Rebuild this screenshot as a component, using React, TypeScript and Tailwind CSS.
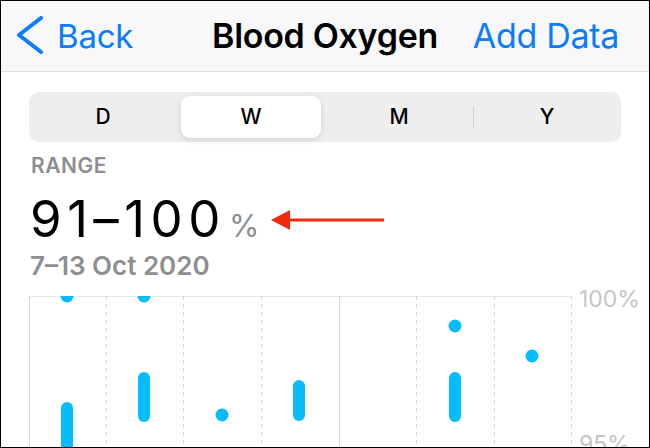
import React from "react";

const SEGMENTS = ["D", "W", "M", "Y"];
const BLUE = "#05bdfd";

// column centres inside the chart (px), dots and bars measured from the top gridline
const DOTS = [
  { x: 38, y: 0 },
  { x: 115, y: 0 },
  { x: 193, y: 119 },
  { x: 426, y: 30 },
  { x: 503, y: 60 },
];
const BARS = [
  { x: 38, y1: 112, y2: 200 },
  { x: 115, y1: 82, y2: 120 },
  { x: 270, y1: 90, y2: 119 },
  { x: 426, y1: 82, y2: 120 },
];
const GRID = [0, 77, 154, 232, 310, 387, 465, 542];

function Chart() {
  return (
    <svg width="544" height="160" className="block shrink-0">
      <line x1="0" y1="0.5" x2="543" y2="0.5" stroke="#e6e6e8" strokeWidth="1" />
      {GRID.map((x, i) => {
        const solid = i === 0 || i === 4;
        return (
          <line
            key={x}
            x1={x + 0.5}
            y1="0"
            x2={x + 0.5}
            y2="160"
            stroke={solid ? "#d9d9db" : "#d6d6d8"}
            strokeWidth="1"
            strokeDasharray={solid ? undefined : "4 4"}
          />
        );
      })}
      {BARS.map((b) => (
        <line
          key={b.x}
          x1={b.x}
          y1={b.y1}
          x2={b.x}
          y2={b.y2}
          stroke={BLUE}
          strokeWidth="12"
          strokeLinecap="round"
        />
      ))}
      {DOTS.map((d) => (
        <circle key={`${d.x}-${d.y}`} cx={d.x} cy={d.y} r="6.5" fill={BLUE} />
      ))}
    </svg>
  );
}

export default function App() {
  return (
    <div className="w-[650px] h-[448px] overflow-hidden border border-black bg-white font-['Inter',sans-serif]">
      {/* Nav bar */}
      <div className="grid h-[71px] grid-cols-[1fr_auto_1fr] items-center border-b border-[#dedee0] bg-[#f8f8fa]">
        <div className="flex items-center pl-[14px] text-[#0a7cff]">
          <svg width="30" height="40" viewBox="0 0 30 40" className="shrink-0">
            <polyline
              points="26,2 4,19 26,36"
              fill="none"
              stroke="currentColor"
              strokeWidth="4"
              strokeLinecap="round"
              strokeLinejoin="round"
            />
          </svg>
          <span className="ml-[12px] text-[33px] leading-none tracking-[-0.2px]">Back</span>
        </div>
        <div className="text-[34px] font-semibold leading-none tracking-[-0.3px] text-black">
          Blood Oxygen
        </div>
        <div className="pr-[30px] text-right text-[34px] leading-none tracking-[-0.3px] text-[#0a7cff]">
          Add Data
        </div>
      </div>

      <div className="px-[28px]">
        {/* Segmented control */}
        <div className="mt-[20px] flex h-[50px] w-[592px] items-center rounded-[10px] bg-[#eeeeef]">
          {SEGMENTS.map((s, i) => (
            <div key={s} className="relative flex h-full w-[148px] items-center justify-center">
              {i === 1 && (
                <div className="absolute inset-[4px] rounded-[9px] bg-white shadow-[0_2px_6px_rgba(0,0,0,0.12)]" />
              )}
              {i === 3 && <div className="absolute left-0 top-[14px] h-[22px] w-px bg-[#cfcfd2]" />}
              <span className="relative text-[21px] font-medium text-black">{s}</span>
            </div>
          ))}
        </div>

        {/* Summary */}
        <div className="mt-[12px] pl-[2px] text-[21px] font-semibold leading-[24px] tracking-[0.5px] text-[#8e8e93]">
          RANGE
        </div>
        <div className="mt-[13px] flex items-baseline pl-[1px]">
          <span className="text-[51px] leading-[56px] tracking-[5.5px] text-black">91–100</span>
          <span className="ml-[3px] text-[31px] text-[#8e8e93]">%</span>
          <svg width="114" height="22" viewBox="0 0 114 22" className="ml-[12px] self-center">
            <line x1="16" y1="11" x2="113" y2="11" stroke="#f22a0c" strokeWidth="3" />
            <polygon points="0,11 19,1 19,21" fill="#f22a0c" />
          </svg>
        </div>
        <div className="mt-[1px] pl-[1px] text-[26px] font-semibold leading-[30px] text-[#8e8e93]">
          7–13 Oct 2020
        </div>

        {/* Chart */}
        <div className="mt-[15px] flex">
          <Chart />
          <div className="ml-[6px] flex h-[160px] flex-col justify-between">
            <span className="-mt-[11px] text-[23px] leading-[28px] text-[#c5c5c7]">100%</span>
            <span className="-mb-[2px] text-[23px] leading-[28px] text-[#c5c5c7]">95%</span>
          </div>
        </div>
      </div>
    </div>
  );
}
